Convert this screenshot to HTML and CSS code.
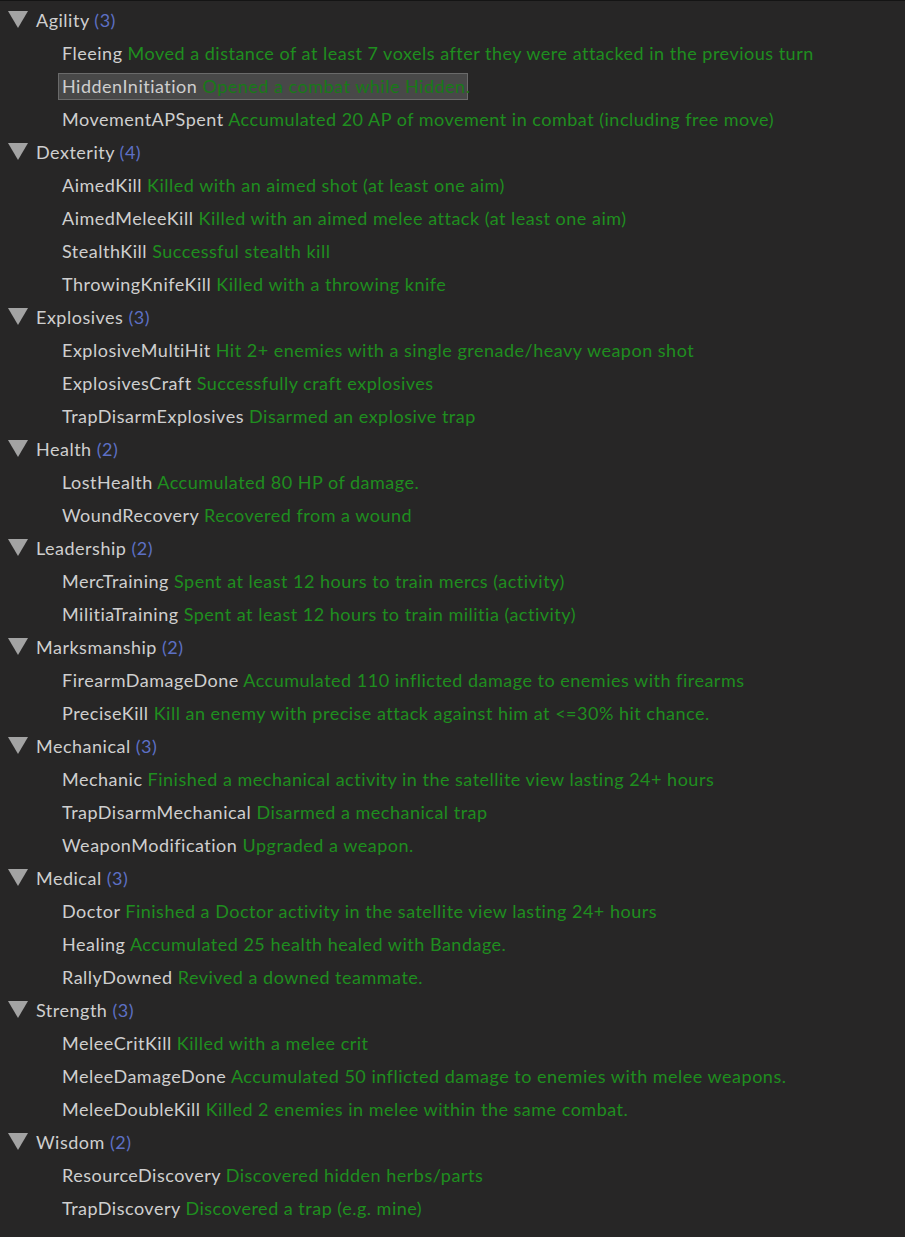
FILE: index.html
```html
<!DOCTYPE html>
<html>
<head>
<meta charset="utf-8">
<link rel="stylesheet" href="styles.css">
</head>
<body>
<div class="tree">
  <div class="cat"><span class="tri"></span><span class="name">Agility</span> <span class="count">(3)</span></div>
  <div class="item"><span class="key">Fleeing</span> <span class="desc">Moved a distance of at least 7 voxels after they were attacked in the previous turn</span></div>
  <div class="item selected"><span class="key">HiddenInitiation</span> <span class="desc">Opened a combat while Hidden.</span></div>
  <div class="item"><span class="key">MovementAPSpent</span> <span class="desc">Accumulated 20 AP of movement in combat (including free move)</span></div>

  <div class="cat"><span class="tri"></span><span class="name">Dexterity</span> <span class="count">(4)</span></div>
  <div class="item"><span class="key">AimedKill</span> <span class="desc">Killed with an aimed shot (at least one aim)</span></div>
  <div class="item"><span class="key">AimedMeleeKill</span> <span class="desc">Killed with an aimed melee attack (at least one aim)</span></div>
  <div class="item"><span class="key">StealthKill</span> <span class="desc">Successful stealth kill</span></div>
  <div class="item"><span class="key">ThrowingKnifeKill</span> <span class="desc">Killed with a throwing knife</span></div>

  <div class="cat"><span class="tri"></span><span class="name">Explosives</span> <span class="count">(3)</span></div>
  <div class="item"><span class="key">ExplosiveMultiHit</span> <span class="desc">Hit 2+ enemies with a single grenade/heavy weapon shot</span></div>
  <div class="item"><span class="key">ExplosivesCraft</span> <span class="desc">Successfully craft explosives</span></div>
  <div class="item"><span class="key">TrapDisarmExplosives</span> <span class="desc">Disarmed an explosive trap</span></div>

  <div class="cat"><span class="tri"></span><span class="name">Health</span> <span class="count">(2)</span></div>
  <div class="item"><span class="key">LostHealth</span> <span class="desc">Accumulated 80 HP of damage.</span></div>
  <div class="item"><span class="key">WoundRecovery</span> <span class="desc">Recovered from a wound</span></div>

  <div class="cat"><span class="tri"></span><span class="name">Leadership</span> <span class="count">(2)</span></div>
  <div class="item"><span class="key">MercTraining</span> <span class="desc">Spent at least 12 hours to train mercs (activity)</span></div>
  <div class="item"><span class="key">MilitiaTraining</span> <span class="desc">Spent at least 12 hours to train militia (activity)</span></div>

  <div class="cat"><span class="tri"></span><span class="name">Marksmanship</span> <span class="count">(2)</span></div>
  <div class="item"><span class="key">FirearmDamageDone</span> <span class="desc">Accumulated 110 inflicted damage to enemies with firearms</span></div>
  <div class="item"><span class="key">PreciseKill</span> <span class="desc">Kill an enemy with precise attack against him at &lt;=30% hit chance.</span></div>

  <div class="cat"><span class="tri"></span><span class="name">Mechanical</span> <span class="count">(3)</span></div>
  <div class="item"><span class="key">Mechanic</span> <span class="desc">Finished a mechanical activity in the satellite view lasting 24+ hours</span></div>
  <div class="item"><span class="key">TrapDisarmMechanical</span> <span class="desc">Disarmed a mechanical trap</span></div>
  <div class="item"><span class="key">WeaponModification</span> <span class="desc">Upgraded a weapon.</span></div>

  <div class="cat"><span class="tri"></span><span class="name">Medical</span> <span class="count">(3)</span></div>
  <div class="item"><span class="key">Doctor</span> <span class="desc">Finished a Doctor activity in the satellite view lasting 24+ hours</span></div>
  <div class="item"><span class="key">Healing</span> <span class="desc">Accumulated 25 health healed with Bandage.</span></div>
  <div class="item"><span class="key">RallyDowned</span> <span class="desc">Revived a downed teammate.</span></div>

  <div class="cat"><span class="tri"></span><span class="name">Strength</span> <span class="count">(3)</span></div>
  <div class="item"><span class="key">MeleeCritKill</span> <span class="desc">Killed with a melee crit</span></div>
  <div class="item"><span class="key">MeleeDamageDone</span> <span class="desc">Accumulated 50 inflicted damage to enemies with melee weapons.</span></div>
  <div class="item"><span class="key">MeleeDoubleKill</span> <span class="desc">Killed 2 enemies in melee within the same combat.</span></div>

  <div class="cat"><span class="tri"></span><span class="name">Wisdom</span> <span class="count">(2)</span></div>
  <div class="item"><span class="key">ResourceDiscovery</span> <span class="desc">Discovered hidden herbs/parts</span></div>
  <div class="item"><span class="key">TrapDiscovery</span> <span class="desc">Discovered a trap (e.g. mine)</span></div>
</div>
</body>
</html>
```

FILE: styles.css
```css
html, body {
  margin: 0;
  padding: 0;
  background: #272626;
}
body {
  border-top: 1px solid #141414;
  font-family: "Lato", "Noto Sans", sans-serif;
  font-size: 18px;
  letter-spacing: 0.5px;
  color: #cfcfcf;
  height: 1236px;
  overflow: hidden;
}
.tree {
  display: flex;
  flex-direction: column;
  gap: 6px;
  padding-top: 5.5px;
}
.cat, .item {
  height: 27px;
  line-height: 27px;
  white-space: pre;
  box-sizing: border-box;
}
.cat {
  padding-left: 8px;
}
.tri {
  display: inline-block;
  vertical-align: top;
  width: 0;
  height: 0;
  border-left: 10px solid transparent;
  border-right: 10px solid transparent;
  border-top: 17px solid #a3a3a3;
  margin-right: 8px;
  margin-top: 4px;
}
.count {
  color: #5d70c4;
}
.item {
  padding-left: 62px;
}
.desc {
  color: #1f8e1f;
}
.item.selected {
  margin-left: 58px;
  padding-left: 3px;
  line-height: 25px;
  width: 410px;
  background: #484848;
  border: 1px solid #6a6a6a;
}
.item.selected .desc {
  color: #177a17;
}
```
